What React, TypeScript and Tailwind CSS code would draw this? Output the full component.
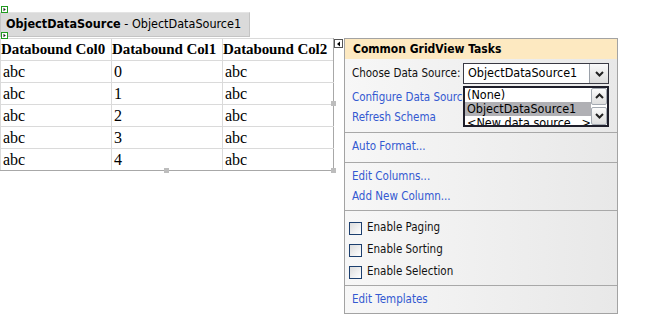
import React from "react";

const ui = "font-['DejaVu_Sans_Condensed','DejaVu_Sans',sans-serif]";
const serif = "font-['Liberation_Serif','Times_New_Roman',serif]";

const Marker = ({ className }: { className: string }) => (
  <svg className={`absolute ${className}`} width="7" height="7" viewBox="0 0 7 7">
    <rect x="0.5" y="0.5" width="6" height="6" fill="#fff" stroke="#1f9a1f" />
    <path d="M2.5 1.8 L4.8 3.5 L2.5 5.2 Z" fill="#222" />
  </svg>
);

const Chevron = ({ up }: { up?: boolean }) => (
  <svg width="9" height="6" viewBox="0 0 9 6">
    <path
      d={up ? "M1 5 L4.5 1.5 L8 5" : "M1 1 L4.5 4.5 L8 1"}
      fill="none"
      stroke="#222"
      strokeWidth="2"
    />
  </svg>
);

const Checkbox = () => (
  <span className="w-[13px] h-[13px] border border-[#1c3f6e] bg-gradient-to-br from-[#dcdcdc] to-white shrink-0" />
);

const rows = [0, 1, 2, 3, 4];

export default function App() {
  return (
    <div className="relative w-[661px] h-[332px] bg-white overflow-hidden">
      {/* designer surface */}
      <div className="pt-[12px]">
        <div className={`w-[250px] h-[25px] bg-[#dadada] border border-[#c4c4c4] border-t-[#e4e4e4] flex items-center pl-[5px] text-[12.5px] text-black ${ui}`}>
          <span className="font-bold">ObjectDataSource</span>
          <span>&nbsp;- ObjectDataSource1</span>
        </div>
        <table className={`mt-[1px] w-[334px] border-collapse table-fixed ${serif} text-black`}>
          <thead>
            <tr className="h-[22px]">
              {["Databound Col0", "Databound Col1", "Databound Col2"].map((h, i) => (
                <th
                  key={h}
                  className={`text-left font-bold text-[15px] tracking-[-0.1px] leading-none p-0 border-t border-l border-[#dadada] whitespace-nowrap ${i === 2 ? "border-r border-r-[#a8a8a8]" : ""}`}
                >
                  {h}
                </th>
              ))}
            </tr>
          </thead>
          <tbody>
            {rows.map((n) => (
              <tr key={n} className="h-[22px]">
                <td className={`text-[16px] leading-none pl-[2px] border border-[#dadada] ${n === 4 ? "border-b-[#a8a8a8]" : ""}`}>abc</td>
                <td className={`text-[16px] leading-none pl-[2px] border border-[#dadada] ${n === 4 ? "border-b-[#a8a8a8]" : ""}`}>{n}</td>
                <td className={`text-[16px] leading-none pl-[2px] border border-[#dadada] border-r-[#a8a8a8] ${n === 4 ? "border-b-[#a8a8a8]" : ""}`}>abc</td>
              </tr>
            ))}
          </tbody>
        </table>
      </div>

      <Marker className="left-[1px] top-[6px]" />
      <Marker className="left-[1px] top-[32px]" />

      {/* resize handles */}
      <span className="absolute left-[331px] top-[101px] w-[5px] h-[5px] bg-[#bdbdbd]" />
      <span className="absolute left-[164px] top-[168px] w-[5px] h-[5px] bg-[#bdbdbd]" />
      <span className="absolute left-[331px] top-[168px] w-[5px] h-[5px] bg-[#bdbdbd]" />

      {/* smart tag button */}
      <span className="absolute left-[334px] top-[39px] w-[9px] h-[9px] border border-[#555] bg-white flex items-center justify-center">
        <svg width="5" height="6" viewBox="0 0 5 6">
          <path d="M4 0.5 L1 3 L4 5.5 Z" fill="#000" />
        </svg>
      </span>

      {/* tasks panel */}
      <div className={`absolute left-[344px] top-[38px] w-[274px] h-[276px] border border-[#a3a3a3] bg-gradient-to-r from-[#f7f7f7] to-[#e8e8e8] text-[11.5px] ${ui}`}>
        <div className="h-[20px] bg-[#fde9c1] flex items-center pl-[8px] font-bold text-[12px] text-black">
          Common GridView Tasks
        </div>

        <div className="relative pt-[4px] pb-[4px]">
          <div className="h-[21px] flex items-center pl-[7px] pr-[8px]">
            <span className="text-[#111]">Choose Data Source:</span>
            <div className="ml-auto w-[146px] h-[21px] border border-[#3a3a44] bg-white flex items-center">
              <span className="pl-[4px] text-[12.5px] text-black flex-1">ObjectDataSource1</span>
              <span className="w-[19px] h-[19px] border-l border-[#9aa0a8] bg-gradient-to-b from-[#fafafa] to-[#dcdcdc] flex items-center justify-center">
                <Chevron />
              </span>
            </div>
          </div>
          <div className="mt-[4px] h-[20px] w-[118px] overflow-hidden flex items-center pl-[7px] text-[#3359d1] whitespace-nowrap">Configure Data Source...</div>
          <div className="h-[20px] flex items-center pl-[7px] text-[#3359d1]">Refresh Schema</div>

          {/* open dropdown list */}
          <div className="absolute left-[118px] top-[27px] w-[146px] h-[41px] border-2 border-[#1e1e2a] bg-white overflow-hidden flex text-[12.5px] text-black">
            <div className="flex-1 flex flex-col leading-[14px]">
              <span className="pl-[2px] h-[14px]">(None)</span>
              <span className="pl-[2px] h-[14px] bg-[#b0b0b4]">ObjectDataSource1</span>
              <span className="pl-[2px] h-[14px] whitespace-nowrap">&lt;New data source...&gt;</span>
            </div>
            <div className="w-[16px] flex flex-col gap-[2px] bg-white">
              <span className="h-[17px] border border-[#a4aab2] rounded-[2px] bg-gradient-to-b from-[#fbfbfb] to-[#dedede] flex items-center justify-center">
                <Chevron up />
              </span>
              <span className="h-[19px] border border-[#a4aab2] rounded-[2px] bg-gradient-to-b from-[#fbfbfb] to-[#dedede] flex items-center justify-center">
                <Chevron />
              </span>
            </div>
          </div>
        </div>

        <div className="h-px bg-[#a8a8a8]" />
        <div className="pt-[4px] pb-[5px]">
          <div className="h-[20px] flex items-center pl-[7px] text-[#3359d1]">Auto Format...</div>
        </div>

        <div className="h-px bg-[#a8a8a8]" />
        <div className="pt-[4px] pb-[3px]">
          <div className="h-[20px] flex items-center pl-[7px] text-[#3359d1]">Edit Columns...</div>
          <div className="h-[20px] flex items-center pl-[7px] text-[#3359d1]">Add New Column...</div>
        </div>

        <div className="h-px bg-[#a8a8a8]" />
        <div className="pt-[6px] pb-[2px]">
          {["Enable Paging", "Enable Sorting", "Enable Selection"].map((t) => (
            <div key={t} className="h-[22px] flex items-center gap-[5px] pl-[4px] text-[#111]">
              <Checkbox />
              <span>{t}</span>
            </div>
          ))}
        </div>

        <div className="h-px bg-[#a8a8a8]" />
        <div className="pt-[4px] pb-[3px]">
          <div className="h-[20px] flex items-center pl-[7px] text-[#3359d1]">Edit Templates</div>
        </div>
      </div>
    </div>
  );
}
